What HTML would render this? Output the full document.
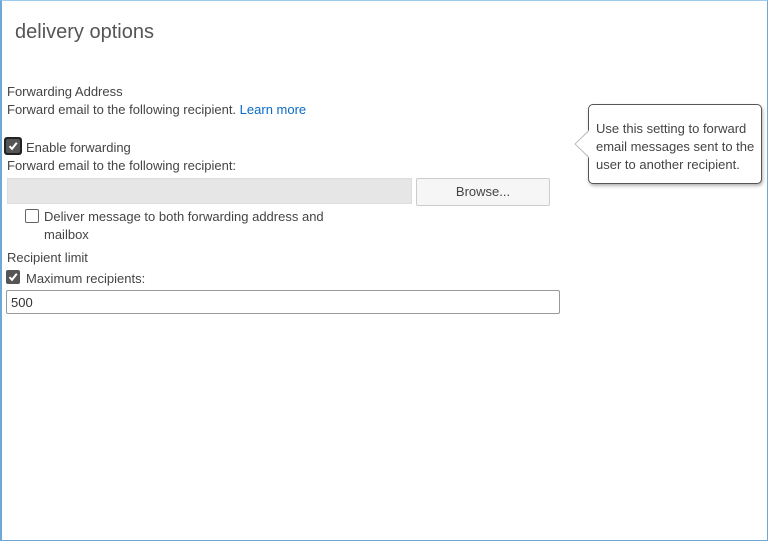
<!DOCTYPE html>
<html><head><style>
html,body{margin:0;padding:0}
body{width:768px;height:541px;position:relative;overflow:hidden;background:#fff;font-family:"Liberation Sans",sans-serif;color:#444;font-size:13px}
.frame{position:absolute;left:0;top:0;height:539px;border:1px solid #6fa8d6;border-top-color:#9ccbee;border-left:2px solid #6fa8d6;box-sizing:content-box;width:765px}
.t{position:absolute;white-space:nowrap;line-height:16px}
.cb{position:absolute;width:12px;height:12px;border:1px solid #666;border-radius:2px;background:#fff}
.cbc{position:absolute;width:14px;height:14px;background:#555;border-radius:2px}
.cbc svg{position:absolute;left:2px;top:2px}
</style></head><body>
<div class="frame"></div>
<div class="t" style="left:15px;top:20px;font-size:20px;line-height:24px;color:#555">delivery options</div>
<div class="t" style="left:7px;top:84px">Forwarding Address</div>
<div class="t" style="left:7px;top:102px">Forward email to the following recipient. <span style="color:#0a6ac9">Learn more</span></div>
<div style="position:absolute;left:4px;top:137px;width:18px;height:18px;background:#222;border-radius:3px"></div>
<div class="cbc" style="left:6px;top:139px"><svg width="10" height="10" viewBox="0 0 10 10"><path d="M1.5 5.2 L4 7.8 L8.8 1.8" stroke="#fff" stroke-width="2" fill="none"/></svg></div>
<div class="t" style="left:26px;top:140px">Enable forwarding</div>
<div class="t" style="left:7px;top:158px">Forward email to the following recipient:</div>
<div style="position:absolute;left:7px;top:178px;width:403px;height:24px;background:#e6e6e6;border:1px solid #ddd"></div>
<div style="position:absolute;left:416px;top:178px;width:132px;height:26px;background:#f6f6f6;border:1px solid #ccc;border-radius:2px;text-align:center;line-height:26px">Browse...</div>
<div class="cb" style="left:25px;top:209px"></div>
<div class="t" style="left:44px;top:209px">Deliver message to both forwarding address and</div>
<div class="t" style="left:44px;top:227px">mailbox</div>
<div class="t" style="left:7px;top:250px">Recipient limit</div>
<div class="cbc" style="left:6px;top:270px"><svg width="10" height="10" viewBox="0 0 10 10"><path d="M1.5 5.2 L4 7.8 L8.8 1.8" stroke="#fff" stroke-width="2" fill="none"/></svg></div>
<div class="t" style="left:26px;top:271px">Maximum recipients:</div>
<div style="position:absolute;left:6px;top:290px;width:552px;height:22px;border:1px solid #999;border-radius:2px"></div>
<div class="t" style="left:11px;top:295px;color:#333">500</div>
<div style="position:absolute;left:588px;top:104px;width:172px;height:78px;border:1px solid #555;border-radius:5px;background:#fff;box-shadow:1px 2px 3px rgba(0,0,0,0.3)"></div>
<svg style="position:absolute;left:574px;top:130px" width="16" height="30"><path d="M15.5 0 L1 14 L15.5 28" fill="#fff" stroke="#bbb"/><rect x="15" y="0" width="2" height="30" fill="#fff"/></svg>
<div class="t" style="left:596px;top:120px;line-height:18px;color:#444">Use this setting to forward<br>email messages sent to the<br>user to another recipient.</div>
</body></html>
